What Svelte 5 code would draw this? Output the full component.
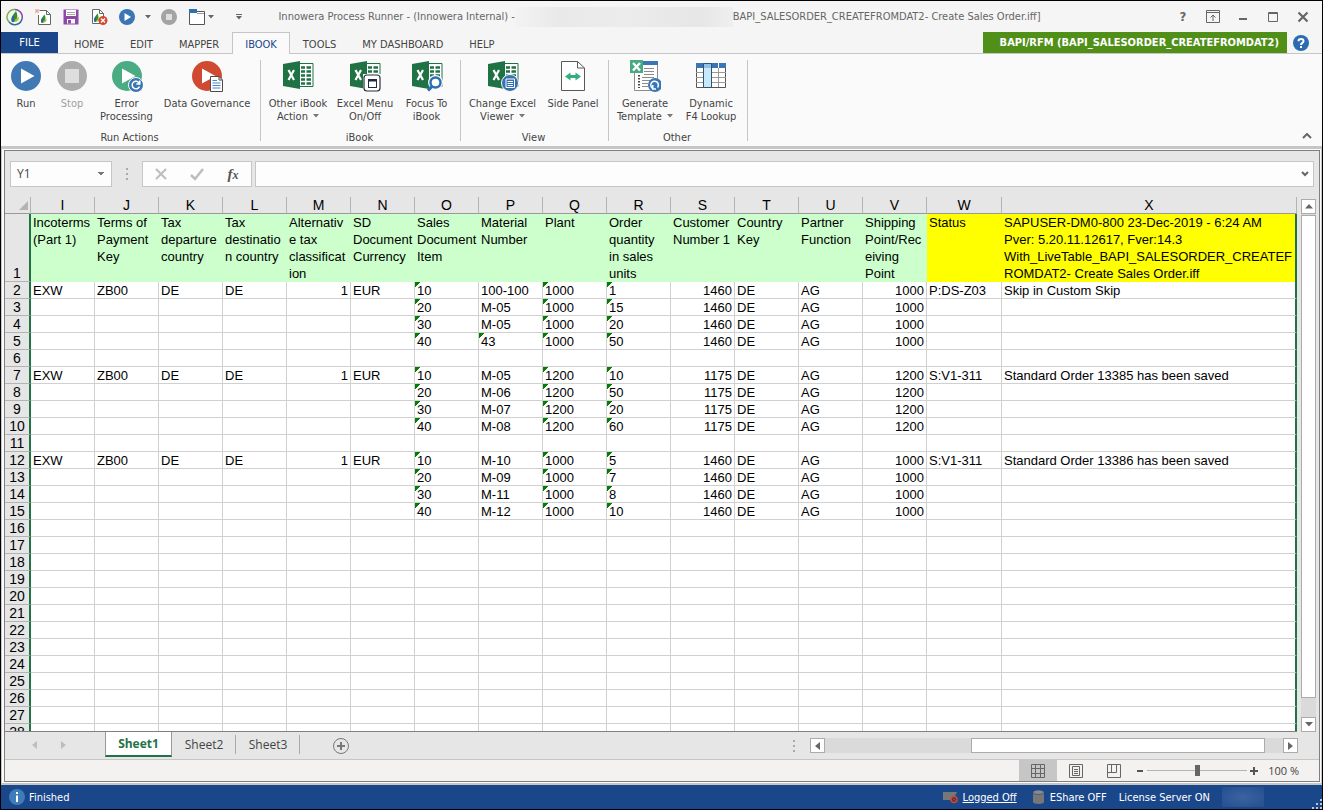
<script lang="ts">
    type RibbonButton = {
        lines: string[];
        icon: string;
        width: number;
        menu?: boolean;
        disabled?: boolean;
    };

    type Column = {
        letter: string;
        title: string;
        tone?: "status";
        numeric?: boolean;
        flagged?: boolean;
    };

    const ribbonTabs = ["HOME", "EDIT", "MAPPER", "IBOOK", "TOOLS", "MY DASHBOARD", "HELP"];
    let activeTab = $state("IBOOK");

    const groups: { name: string; buttons: RibbonButton[] }[] = [
        {
            name: "Run Actions",
            buttons: [
                { lines: ["Run"], icon: "run", width: 46 },
                { lines: ["Stop"], icon: "stop", width: 46, disabled: true },
                { lines: ["Error", "Processing"], icon: "error", width: 63 },
                { lines: ["Data Governance"], icon: "governance", width: 98 },
            ],
        },
        {
            name: "iBook",
            buttons: [
                { lines: ["Other iBook", "Action"], icon: "excel", width: 70, menu: true },
                { lines: ["Excel Menu", "On/Off"], icon: "excel-menu", width: 64 },
                { lines: ["Focus To", "iBook"], icon: "excel-focus", width: 59 },
            ],
        },
        {
            name: "View",
            buttons: [
                { lines: ["Change Excel", "Viewer"], icon: "excel-viewer", width: 79, menu: true },
                { lines: ["Side Panel"], icon: "panel", width: 62 },
            ],
        },
        {
            name: "Other",
            buttons: [
                { lines: ["Generate", "Template"], icon: "template", width: 68, menu: true },
                { lines: ["Dynamic", "F4 Lookup"], icon: "lookup", width: 64 },
            ],
        },
    ];

    const columns: Column[] = [
        { letter: "I", title: "Incoterms\n(Part 1)" },
        { letter: "J", title: "Terms of\nPayment\nKey" },
        { letter: "K", title: "Tax\ndeparture\ncountry" },
        { letter: "L", title: "Tax\ndestinatio\nn country" },
        { letter: "M", title: "Alternativ\ne tax\nclassificat\nion", numeric: true },
        { letter: "N", title: "SD\nDocument\nCurrency" },
        { letter: "O", title: "Sales\nDocument\nItem", flagged: true },
        { letter: "P", title: "Material\nNumber" },
        { letter: "Q", title: "Plant", flagged: true },
        { letter: "R", title: "Order\nquantity\nin sales\nunits", flagged: true },
        { letter: "S", title: "Customer\nNumber 1", numeric: true },
        { letter: "T", title: "Country\nKey" },
        { letter: "U", title: "Partner\nFunction" },
        { letter: "V", title: "Shipping\nPoint/Rec\neiving\nPoint", numeric: true },
        { letter: "W", title: "Status", tone: "status" },
        {
            letter: "X",
            title: "SAPUSER-DM0-800 23-Dec-2019 - 6:24 AM\nPver: 5.20.11.12617, Fver:14.3\nWith_LiveTable_BAPI_SALESORDER_CREATEF\nROMDAT2- Create Sales Order.iff",
            tone: "status",
        },
    ];

    const orders = [
        {
            row: 2, plant: "1000", customer: "1460", status: "P:DS-Z03", message: "Skip in Custom Skip",
            items: [["10", "100-100", "1"], ["20", "M-05", "15"], ["30", "M-05", "20"], ["40", "43", "50"]],
        },
        {
            row: 7, plant: "1200", customer: "1175", status: "S:V1-311", message: "Standard Order 13385 has been saved",
            items: [["10", "M-05", "10"], ["20", "M-06", "50"], ["30", "M-07", "20"], ["40", "M-08", "60"]],
        },
        {
            row: 12, plant: "1000", customer: "1460", status: "S:V1-311", message: "Standard Order 13386 has been saved",
            items: [["10", "M-10", "5"], ["20", "M-09", "7"], ["30", "M-11", "8"], ["40", "M-12", "10"]],
        },
    ];

    const cells: Record<number, string[]> = {};
    for (const o of orders) {
        o.items.forEach(([item, material, qty], i) => {
            const head = i === 0 ? ["EXW", "ZB00", "DE", "DE", "1", "EUR"] : ["", "", "", "", "", ""];
            const tail = i === 0 ? [o.status, o.message] : ["", ""];
            cells[o.row + i] = [
                ...head, item, material, o.plant, qty, o.customer, "DE", "AG", o.plant, ...tail,
            ];
        });
    }

    const rowNumbers = Array.from({ length: 27 }, (_, i) => i + 2);

    // numbers stored as text get the green corner
    function isFlagged(col: Column, value: string) {
        if (!value) return false;
        return !!col.flagged || (col.letter === "P" && /^\d+$/.test(value));
    }

    const sheets = ["Sheet1", "Sheet2", "Sheet3"];
    let activeSheet = $state("Sheet1");
    let zoom = $state(100);
    let formula = $state("");
</script>

{#snippet excelBook()}
    <path d="M15 3.500H31V26.500H15Z" fill="#fff" stroke="#1f7244" />
    <path d="M19 7.500h4M24.500 7.500h4.500M19 11.500h4M24.500 11.500h4.500M19 15.500h4M24.500 15.500h4.500M19 19.500h4M24.500 19.500h4.500M19 23.500h4M24.500 23.500h4.500" stroke="#1f7244" stroke-width="2.600" />
    <path d="M1 4L18 1V29L1 26Z" fill="#1f7244" />
    <path d="M6.500 10L12 20M12 10L6.500 20" stroke="#fff" stroke-width="2.200" />
{/snippet}

{#snippet leaf()}
    <path d="M6 13C4 9 7 6 10 2C12 6 12 11 8 13Z" fill="#2f8f2f" />
    <path d="M6 13C5 10 6 7 8 6L8 13Z" fill="#2b62a8" />
    <path d="M8 13C11 13 13 11 13 8C11 9 9 10 8 13Z" fill="#a6c626" />
{/snippet}

{#snippet ribbonIcon(name: string)}
    <svg class="ribbon-icon" width="32" height="32" viewBox="0 0 32 32" fill="none" aria-hidden="true">
        {#if name === "run"}
            <circle cx="16" cy="16" r="15" fill="#4179b5" />
            <path d="M11 8.500L24.500 16L11 23.500Z" fill="#fff" />
        {:else if name === "stop"}
            <circle cx="16" cy="16" r="15" fill="#adadad" />
            <rect x="9" y="9" width="14" height="14" fill="#dedede" />
        {:else if name === "error"}
            <circle cx="16" cy="16" r="15" fill="#4bab83" />
            <path d="M11 8.500L24.500 16L11 23.500Z" fill="#fff" />
            <circle cx="25" cy="25" r="7.500" fill="#3a75b4" stroke="#fafafa" />
            <path d="M28.200 23A3.800 3.800 0 1 0 28.500 26.500M28.800 20.500V24H25.300" stroke="#fff" stroke-width="1.500" />
        {:else if name === "governance"}
            <circle cx="16" cy="16" r="15" fill="#cf4a31" />
            <path d="M11 8.500L24.500 16L11 23.500Z" fill="#fff" />
            <path d="M19.500 16.500H28L31.500 20V31.500H19.500Z" fill="#fff" stroke="#4d4d4d" />
            <path d="M28 16.500V20H31.500" stroke="#4d4d4d" />
            <path d="M21.500 20.500H26M21.500 23H29.500M21.500 25.500H29.500M21.500 28H29.500" stroke="#4a86c2" />
        {:else if name.startsWith("excel")}
            {@render excelBook()}
            {#if name === "excel-menu"}
                <rect x="14" y="14" width="18" height="18" fill="#fafafa" />
                <rect x="15" y="15" width="16" height="16" rx="3" fill="#fff" stroke="#2b2f3a" stroke-width="1.200" />
                <rect x="19.500" y="19.500" width="8" height="8" fill="#fff" stroke="#1d2a44" />
                <path d="M19 20.500H28" stroke="#1d2a44" stroke-width="2" />
            {:else if name === "excel-focus"}
                <circle cx="24.500" cy="22.500" r="7.500" fill="#fafafa" />
                <circle cx="24.500" cy="22.500" r="5" fill="#fff" stroke="#2a6db5" stroke-width="2.400" />
                <path d="M21 26.500L17 30.500" stroke="#2a6db5" stroke-width="3" />
            {:else if name === "excel-viewer"}
                <circle cx="23" cy="23" r="8.500" fill="#3572b0" stroke="#fafafa" />
                <path d="M19 19H27.500V27.500H19Z" stroke="#fff" />
                <path d="M20.500 21.500H26M20.500 23.500H26M20.500 25.500H26" stroke="#fff" />
            {/if}
        {:else if name === "panel"}
            <path d="M4.500 1.500H20.500L27.500 8V30.500H4.500Z" fill="#fff" stroke="#595959" />
            <path d="M20.500 1.500V8H27.500" stroke="#595959" />
            <path d="M12 16.500H20" stroke="#33ae7c" stroke-width="3" />
            <path d="M8 16.500L13.500 12.500V20.500ZM24 16.500L18.500 12.500V20.500Z" fill="#33ae7c" />
        {:else if name === "template"}
            <path d="M5.500 13V30.500H28.500V2.500H14" fill="#fff" stroke="#8c8c8c" />
            <path d="M14 1H29V5H14Z" fill="#3a75b4" />
            <path d="M1 0H14V13H1Z" fill="#48a982" />
            <path d="M4 3L11 10.500M11 3L4 10.500" stroke="#fff" stroke-width="2.400" />
            <path d="M15 8.500H25M15 11.500H25M15 14.500H25M13 17.500H25M13 20.500H22M13 23.500H19M13 26.500H19" stroke="#8c8c8c" />
            <path d="M10 15V28" stroke="#444" stroke-width="2" stroke-dasharray="1.500 1.500" />
            <circle cx="26" cy="25" r="7" fill="#3a75b4" />
            <path d="M24 28.500A3.800 3.800 0 1 1 28.500 27.500M23.800 25V29H27" stroke="#fff" stroke-width="1.500" />
        {:else}
            <path d="M1.500 3.500H30.500V27.500H1.500Z" fill="#fff" stroke="#555" />
            <path d="M1 3H31V8H1Z" fill="#3a75b4" />
            <path d="M1 12.500H31M1 17.500H31M1 22.500H31M16.500 8V27M23.500 8V27" stroke="#999" />
            <path d="M23.500 3V8" stroke="#fff" />
            <path d="M8.500 3.500H16.500V27.500H8.500Z" fill="#c9e9fb" stroke="#2d5673" />
            <path d="M9 4H16V8H9Z" fill="#8fc1e8" />
        {/if}
    </svg>
{/snippet}

{#snippet caret()}
    <svg class="caret" width="6" height="4" viewBox="0 0 6 4" aria-hidden="true">
        <path d="M0 0H6L3 3.500Z" fill="currentColor" />
    </svg>
{/snippet}

<div class="window">
    <header class="titlebar">
        <div class="quick">
            <button class="quick-btn" aria-label="Application menu">
                <svg width="18" height="18" viewBox="0 0 18 18" fill="none">
                    <path d="M9 1.500A7.500 7.500 0 0 0 3 14" stroke="#7fb24a" stroke-width="1.500" />
                    <path d="M3 14A7.500 7.500 0 0 0 16 11" stroke="#2d6f9f" stroke-width="1.500" />
                    <path d="M9 1.500A7.500 7.500 0 0 1 16 11" stroke="#8a4fa0" stroke-width="1.500" />
                    <g transform="translate(0 1)">{@render leaf()}</g>
                </svg>
            </button>
            <button class="quick-btn" aria-label="New">
                <svg width="18" height="18" viewBox="0 0 18 18" fill="none">
                    <path d="M5.500 2.500H12.500L16.500 6.500V16.500H4.500V7" fill="#fff" stroke="#666" />
                    <path d="M12.500 2.500V6.500H16.500" stroke="#666" />
                    <path d="M3 1V5M1 3H5M1 1L5 5M5 1L1 5" stroke="#e9967a" stroke-width=".7" />
                    <g transform="translate(3 5) scale(.75)">{@render leaf()}</g>
                </svg>
            </button>
            <button class="quick-btn" aria-label="Save">
                <svg width="18" height="18" viewBox="0 0 18 18" fill="none">
                    <path d="M1.500 1.500H16.500V16.500H1.500Z" fill="#8c49a6" />
                    <path d="M4 2H14V8H4Z" fill="#fff" />
                    <path d="M5 4.500H13M5 6.500H13" stroke="#aaa" />
                    <path d="M5 11H13V15.500H5Z" fill="#fff" />
                    <path d="M6 12H9V15.500H6Z" fill="#8c49a6" />
                </svg>
            </button>
            <button class="quick-btn" aria-label="Close file">
                <svg width="18" height="18" viewBox="0 0 18 18" fill="none">
                    <path d="M2.500 1.500H9.500L13.500 5.500V15.500H2.500Z" fill="#fff" stroke="#666" />
                    <path d="M9.500 1.500V5.500H13.500" stroke="#666" />
                    <g transform="translate(0 4) scale(.75)">{@render leaf()}</g>
                    <circle cx="13" cy="12.500" r="4.500" fill="#cf4a31" />
                    <path d="M11 10.500L15 14.500M15 10.500L11 14.500" stroke="#fff" stroke-width="1.300" />
                </svg>
            </button>
            <button class="quick-btn" aria-label="Run">
                <svg width="18" height="18" viewBox="0 0 18 18">
                    <circle cx="9" cy="9" r="8" fill="#3c75b4" />
                    <path d="M6.500 5L13 9L6.500 13Z" fill="#fff" />
                </svg>
            </button>
            <button class="quick-drop" aria-label="Run options">{@render caret()}</button>
            <button class="quick-btn" aria-label="Stop" disabled>
                <svg width="18" height="18" viewBox="0 0 18 18">
                    <circle cx="9" cy="9" r="8" fill="#a3a3a3" />
                    <rect x="6" y="6" width="6" height="6" fill="#dedede" />
                </svg>
            </button>
            <button class="quick-btn" aria-label="Windows">
                <svg width="18" height="18" viewBox="0 0 18 18" fill="none">
                    <path d="M1.500 3.500H16.500V16.500H1.500Z" fill="#fff" stroke="#555" />
                    <path d="M1 1H9V5H1Z" fill="#2f6fb3" />
                    <path d="M9 5.500H16" stroke="#999" />
                </svg>
            </button>
            <button class="quick-drop window-drop" aria-label="Window list">{@render caret()}</button>
            <button class="quick-drop customize" aria-label="Customize toolbar">
                <svg width="6" height="6" viewBox="0 0 6 6">
                    <path d="M0 0H6V1H0ZM0 2H6L3 5.500Z" fill="#666" />
                </svg>
            </button>
        </div>
        <div class="title">
            <span>Innowera Process Runner - (Innowera Internal) -</span>
            <span class="redacted"></span>
            <span>BAPI_SALESORDER_CREATEFROMDAT2- Create Sales Order.iff]</span>
        </div>
        <div class="window-buttons">
            <button aria-label="Help"><b>?</b></button>
            <button aria-label="Ribbon display options">
                <svg width="14" height="13" viewBox="0 0 14 13" fill="none" stroke="#666">
                    <path d="M.5 .5H13.500V12.500H.5ZM.5 2.500H13.500M7 11V5M4.500 7.500L7 5L9.500 7.500" />
                </svg>
            </button>
            <button aria-label="Minimize">
                <svg width="12" height="12" viewBox="0 0 12 12"><path d="M2 7H10V9H2Z" fill="#666" /></svg>
            </button>
            <button aria-label="Maximize">
                <svg width="12" height="12" viewBox="0 0 12 12" fill="none" stroke="#666">
                    <path d="M1.500 1.500H10.500V10.500H1.500ZM1 2.500H11" />
                </svg>
            </button>
            <button aria-label="Close">
                <svg width="12" height="12" viewBox="0 0 12 12" stroke="#666" stroke-width="2.200">
                    <path d="M1.500 1.500L10.500 10.500M10.500 1.500L1.500 10.500" />
                </svg>
            </button>
        </div>
    </header>

    <nav class="tabs">
        <button class="file">FILE</button>
        {#each ribbonTabs as tab}
            <button class="tab" class:active={tab === activeTab} onclick={() => (activeTab = tab)}>{tab}</button>
        {/each}
        <span class="badge">BAPI/RFM (BAPI_SALESORDER_CREATEFROMDAT2)</span>
        <button class="help" aria-label="Help topics">
            <svg width="16" height="16" viewBox="0 0 16 16" fill="none">
                <circle cx="8" cy="8" r="8" fill="#2b6cb0" />
                <path d="M5.500 6.200C5.500 3.200 10.500 3.200 10.500 6.200C10.500 8 8 7.800 8 10" stroke="#fff" stroke-width="2" />
                <path d="M7 11H9V13H7Z" fill="#fff" />
            </svg>
        </button>
    </nav>

    <section class="ribbon">
        {#each groups as group}
            <div class="group">
                <div class="group-buttons">
                    {#each group.buttons as button}
                        <button class="ribbon-btn" style:width="{button.width}px" disabled={button.disabled}>
                            {@render ribbonIcon(button.icon)}
                            {#each button.lines as line, i}
                                <span>
                                    {line}
                                    {#if button.menu && i === button.lines.length - 1}{@render caret()}{/if}
                                </span>
                            {/each}
                        </button>
                    {/each}
                </div>
                <div class="group-name">{group.name}</div>
            </div>
        {/each}
        <button class="collapse" aria-label="Collapse ribbon">
            <svg width="10" height="6" viewBox="0 0 10 6" fill="none" stroke="#666" stroke-width="2">
                <path d="M1 5L5 1L9 5" />
            </svg>
        </button>
    </section>

    <main class="workspace">
        <div class="workbook">
            <div class="formula-bar">
                <select class="name-box" aria-label="Name box">
                    <option>Y1</option>
                </select>
                <span class="dots"></span>
                <div class="formula-actions">
                    <button aria-label="Cancel">
                        <svg width="14" height="14" viewBox="0 0 14 14" stroke="#bdbdbd" stroke-width="2">
                            <path d="M2 2L12 12M12 2L2 12" />
                        </svg>
                    </button>
                    <button aria-label="Enter">
                        <svg width="14" height="14" viewBox="0 0 14 14" fill="none" stroke="#bdbdbd" stroke-width="2.500">
                            <path d="M1 8L5 12L13 2" />
                        </svg>
                    </button>
                    <button class="fx" aria-label="Insert function">f<small>x</small></button>
                </div>
                <div class="formula-field">
                    <input type="text" aria-label="Formula" bind:value={formula} />
                    <button aria-label="Expand formula bar">
                        <svg width="8" height="6" viewBox="0 0 8 6" fill="none" stroke="#666" stroke-width="2">
                            <path d="M1 1L4 4L7 1" />
                        </svg>
                    </button>
                </div>
            </div>

            <div class="sheet">
                <div class="grid">
                    <table>
                        <colgroup>
                            <col class="col-row" />
                            {#each columns as col}
                                <col class="col-{col.letter.toLowerCase()}" />
                            {/each}
                        </colgroup>
                        <thead>
                            <tr>
                                <th class="corner" aria-label="Select all">
                                    <svg width="9" height="9" viewBox="0 0 9 9"><path d="M9 0V9H0Z" fill="#b4b4b4" /></svg>
                                </th>
                                {#each columns as col}
                                    <th scope="col">{col.letter}</th>
                                {/each}
                            </tr>
                        </thead>
                        <tbody>
                            <tr class="titles">
                                <th scope="row">1</th>
                                {#each columns as col}
                                    <td class:status={col.tone === "status"}>{col.title}</td>
                                {/each}
                            </tr>
                            {#each rowNumbers as n}
                                <tr>
                                    <th scope="row">{n}</th>
                                    {#each columns as col, i}
                                        {@const value = cells[n]?.[i] ?? ""}
                                        <td class:numeric={col.numeric} class:flagged={isFlagged(col, value)}>{value}</td>
                                    {/each}
                                </tr>
                            {/each}
                        </tbody>
                    </table>
                </div>
                <div class="vscroll">
                    <button aria-label="Scroll up">
                        <svg width="8" height="5" viewBox="0 0 8 5"><path d="M0 4.500H8L4 0Z" fill="#666" /></svg>
                    </button>
                    <div class="thumb"></div>
                    <div class="space"></div>
                    <button aria-label="Scroll down">
                        <svg width="8" height="5" viewBox="0 0 8 5"><path d="M0 0H8L4 4.500Z" fill="#666" /></svg>
                    </button>
                </div>
            </div>

            <div class="sheet-bar">
                <div class="sheet-nav">
                    <button aria-label="Previous sheet">
                        <svg width="5" height="8" viewBox="0 0 5 8"><path d="M5 0V8L0 4Z" fill="#bdbdbd" /></svg>
                    </button>
                    <button aria-label="Next sheet">
                        <svg width="5" height="8" viewBox="0 0 5 8"><path d="M0 0V8L5 4Z" fill="#bdbdbd" /></svg>
                    </button>
                </div>
                {#each sheets as sheet}
                    <button
                        class="sheet-tab"
                        class:active={sheet === activeSheet}
                        onclick={() => (activeSheet = sheet)}>{sheet}</button>
                {/each}
                <button class="add-sheet" aria-label="New sheet">
                    <svg width="16" height="16" viewBox="0 0 16 16" fill="none" stroke="#777">
                        <circle cx="8" cy="8" r="7.500" />
                        <path d="M8 4V12M4 8H12" stroke-width="2" />
                    </svg>
                </button>
                <span class="dots"></span>
                <div class="hscroll">
                    <button aria-label="Scroll left">
                        <svg width="5" height="8" viewBox="0 0 5 8"><path d="M5 0V8L0 4Z" fill="#666" /></svg>
                    </button>
                    <div class="before"></div>
                    <div class="thumb"></div>
                    <div class="after"></div>
                    <button aria-label="Scroll right">
                        <svg width="5" height="8" viewBox="0 0 5 8"><path d="M0 0V8L5 4Z" fill="#666" /></svg>
                    </button>
                </div>
            </div>

            <div class="view-bar">
                <button class="view active" aria-label="Normal view">
                    <svg width="14" height="14" viewBox="0 0 14 14" fill="none" stroke="#666">
                        <path d="M.5 .5H13.500V13.500H.5ZM.5 4.500H13.500M.5 9.500H13.500M4.500 .5V13.500M9.500 .5V13.500" />
                    </svg>
                </button>
                <button class="view" aria-label="Page layout">
                    <svg width="14" height="14" viewBox="0 0 14 14" fill="none" stroke="#666">
                        <path d="M.5 .5H13.500V13.500H.5ZM3.500 2.500H10.500V11.500H3.500ZM5 5.500H9M5 7.500H9M5 9.500H9" />
                    </svg>
                </button>
                <button class="view" aria-label="Page break preview">
                    <svg width="14" height="14" viewBox="0 0 14 14" fill="none" stroke="#666">
                        <path d="M.5 .5H13.500V13.500H.5ZM4.500 .5V8.500M9.500 .5V8.500M.5 8.500H9.500" />
                    </svg>
                </button>
                <button class="step" aria-label="Zoom out" onclick={() => (zoom -= 10)}>
                    <svg width="8" height="8" viewBox="0 0 8 8"><path d="M1 3H7V5H1Z" fill="#555" /></svg>
                </button>
                <input type="range" min="0" max="200" bind:value={zoom} aria-label="Zoom" />
                <button class="step" aria-label="Zoom in" onclick={() => (zoom += 10)}>
                    <svg width="8" height="8" viewBox="0 0 8 8"><path d="M0 3H8V5H0ZM3 0H5V8H3Z" fill="#555" /></svg>
                </button>
                <span class="zoom-value">{zoom} %</span>
            </div>
        </div>
    </main>

    <footer class="statusbar">
        <svg width="16" height="16" viewBox="0 0 16 16">
            <circle cx="8" cy="8" r="8" fill="#3f7cbc" />
            <path d="M7 3H9V5H7ZM7 6.500H9V13H7Z" fill="#fff" />
        </svg>
        <span class="finished">Finished</span>
        <svg width="16" height="14" viewBox="0 0 16 14" fill="none">
            <path d="M1 2H15L11 10H1Z" fill="#777" />
            <circle cx="12" cy="9.500" r="3" fill="#3a3550" stroke="#d1492e" stroke-width="1.500" />
            <path d="M11 8.500L13 10.500M13 8.500L11 10.500" stroke="#d1492e" />
        </svg>
        <a href="#login">Logged Off</a>
        <svg width="11" height="14" viewBox="0 0 11 14">
            <path d="M0 2V12C0 14.500 11 14.500 11 12V2Z" fill="#777" />
            <ellipse cx="5.500" cy="2.200" rx="5.500" ry="2.200" fill="#8a8a8a" stroke="#1a478a" stroke-width=".6" />
        </svg>
        <span class="eshare">EShare OFF</span>
        <span>License Server ON</span>
        <span class="redacted-user"></span>
        <svg class="grip" width="10" height="10" viewBox="0 0 10 10" fill="#b9c6dc">
            <path d="M8 0H10V2H8ZM4 4H6V6H4ZM8 4H10V6H8ZM0 8H2V10H0ZM4 8H6V10H4ZM8 8H10V10H8Z" />
        </svg>
    </footer>
</div>

<style>
    :global(body) {
      margin: 0;
      overflow: hidden;
    }

    .window {
      display: flex;
      flex-direction: column;
      box-sizing: border-box;
      height: 100vh;
      border: 1px solid #000;
      background: #f5f5f5;
      color: #444;
      font-family: Tahoma, "DejaVu Sans Condensed", sans-serif;
      font-size: 11px;
      line-height: 13px;
      white-space: nowrap;
    }

    button {
      display: flex;
      align-items: center;
      justify-content: center;
      margin: 0;
      padding: 0;
      border: 0;
      background: none;
      color: inherit;
      font: inherit;
    }

    .titlebar {
      display: grid;
      grid-template-columns: 1fr auto 1fr;
      align-items: center;
      height: 31px;
      color: #666;
    }

    .quick {
      display: flex;
      align-items: center;
    }

    .quick-btn {
      width: 28px;
      height: 24px;
    }

    .quick-drop {
      width: 14px;
      height: 24px;

      &.window-drop {
        width: 8px;
        margin-left: -4px;
      }

      &.customize {
        margin-left: 17px;
      }
    }

    .title {
      display: flex;
      align-items: center;
      padding-right: 4px;
    }

    .redacted {
      width: 218px;
      height: 20px;
      background: linear-gradient(90deg, #f3f3f3, #e9e9e9 20%, #ececec 50%, #e6e6e6 85%, #efefef);
    }

    .window-buttons {
      display: flex;
      justify-content: flex-end;
      padding-right: 4px;

      button {
        width: 30px;
        height: 24px;
      }

      b {
        font-size: 13px;
      }
    }

    .tabs {
      display: flex;
      height: 21px;
      border-bottom: 1px solid #c6c6c6;

      .file {
        width: 57px;
        margin-right: 3px;
        background: #1a478a;
        color: #fff;
      }
    }

    .tab {
      box-sizing: border-box;
      padding: 2px 12px 0;
      border: 1px solid transparent;
      border-bottom: 0;

      &.active {
        height: 22px;
        border-color: #c6c6c6;
        background: #fafafa;
        color: #1a478a;
      }
    }

    .badge {
      margin-left: auto;
      padding: 0 8px 0 17px;
      background: #509018;
      color: #fff;
      font-weight: bold;
      line-height: 21px;
    }

    .help {
      width: 16px;
      margin: 0 13px 0 6px;
    }

    .ribbon {
      display: flex;
      padding: 6px 0 5px;
      background: #fafafa;
      border-bottom: 3px solid #c6c6c6;
    }

    .group {
      display: flex;
      flex-direction: column;
      justify-content: space-between;
      height: 81px;
      padding: 0 4px 0 2px;
      border-right: 1px solid #c6c6c6;
    }

    .group-buttons {
      display: flex;
      align-items: flex-start;
    }

    .ribbon-btn {
      flex-direction: column;

      &:disabled {
        color: #a0a0a0;
      }
    }

    .ribbon-icon {
      margin-bottom: 5px;
    }

    .ribbon-btn .caret {
      margin-left: 2px;
      vertical-align: 2px;
      color: #777;
    }

    .group-name {
      margin-bottom: -3px;
      text-align: center;
    }

    .collapse {
      align-self: flex-end;
      margin: 0 10px 2px auto;
    }

    .workspace {
      display: flex;
      flex: 1;
      min-height: 0;
      padding: 1px 1px 1px 2px;
      border-right: 1px solid #c6c6c6;
      border-left: 1px solid #c6c6c6;
      border-bottom: 2px solid #c6c6c6;
      background: #fcfcfc;
    }

    .workbook {
      display: flex;
      flex: 1;
      flex-direction: column;
      min-width: 0;
      border: 1px solid #808080;
      background: #e6e6e6;
      font-family: "Segoe UI", "Open Sans", sans-serif;
      font-size: 12px;
      line-height: 16px;
    }

    .formula-bar {
      display: flex;
      padding: 10px 5px;
    }

    .name-box,
    .formula-actions,
    .formula-field {
      box-sizing: border-box;
      height: 26px;
      border: 1px solid #c6c6c6;
      background: #fdfdfd;
    }

    .name-box {
      width: 102px;
      padding: 0 6px;
      appearance: none;
      border-radius: 0;
      background:
        linear-gradient(45deg, transparent 50%, #777 50%) no-repeat right 10px center / 4px 4px,
        linear-gradient(-45deg, transparent 50%, #777 50%) no-repeat right 6px center / 4px 4px,
        #fdfdfd;
      color: #444;
      font: inherit;
    }

    .dots {
      align-self: center;
      width: 2px;
      height: 12px;
      background: repeating-linear-gradient(#aaa 0 2px, transparent 2px 5px);
    }

    .formula-bar .dots {
      margin: 0 14px;
    }

    .formula-actions {
      display: flex;
      width: 110px;
      margin-right: 3px;

      button {
        flex: 1;
      }

      .fx {
        color: #555;
        font: italic bold 15px "Liberation Serif", serif;
      }

      small {
        padding-top: 3px;
        font-size: 12px;
      }
    }

    .formula-field {
      display: flex;
      flex: 1;

      input {
        flex: 1;
        border: 0;
        background: none;
        font: inherit;
      }

      button {
        width: 16px;
      }
    }

    .sheet {
      display: flex;
      flex: 1;
      min-height: 0;
    }

    .grid {
      flex: 1;
      overflow: hidden;
      border-bottom: 1px solid #808080;
    }

    table {
      width: 100%;
      table-layout: fixed;
      border-collapse: separate;
      border-spacing: 0;
      color: #000;
      font-family: Arial, "Liberation Sans", sans-serif;
      font-size: 13px;
      line-height: 16px;
    }

    .col-row {
      width: 26px;
    }

    col {
      width: 64px;
    }

    .col-w {
      width: 75px;
    }

    .col-x {
      width: auto;
    }

    th {
      padding: 0;
      background: #e6e6e6;
      font-size: 14px;
      font-weight: normal;
    }

    thead th {
      height: 16px;
      border-right: 1px solid #b4b4b4;
      border-bottom: 1px solid #999;
    }

    .corner {
      padding-right: 2px;
      text-align: right;

      svg {
        display: block;
        margin-left: auto;
      }
    }

    tbody th {
      vertical-align: bottom;
      border-right: 2px solid #217346;
      border-bottom: 1px solid #b4b4b4;
    }

    td {
      height: 14px;
      padding: 2px 2px 0;
      overflow: hidden;
      border-right: 1px solid #d0d0d0;
      border-bottom: 1px solid #d0d0d0;
      background: #fff;
      line-height: 14px;
      white-space: pre;

      &:last-child {
        border-right: 2px solid #217346;
      }

      &.numeric {
        text-align: right;
      }

      &.flagged {
        background: linear-gradient(135deg, #008000 4px, transparent 4px) #fff;
      }
    }

    .titles td {
      height: 68px;
      padding-top: 0;
      border-right-color: #cfc;
      border-bottom: 0;
      background: #cfc;
      line-height: 17px;
      vertical-align: top;

      &.status {
        border-right-color: #ff0;
        background: #ff0;
      }

      &:last-child {
        border-right-color: #217346;
      }
    }

    .vscroll {
      display: flex;
      flex-direction: column;
      width: 15px;
      margin: 2px 3px 0 4px;
      background: #dadada;

      .thumb {
        flex: 33;
        margin-top: 1px;
      }

      .space {
        flex: 1;
        min-height: 19px;
      }
    }

    .vscroll button,
    .hscroll button,
    .thumb {
      box-sizing: border-box;
      border: 1px solid #ababab;
      background: #fff;
    }

    .vscroll button,
    .hscroll button {
      width: 15px;
      height: 15px;
    }

    .sheet-bar {
      display: flex;
      height: 27px;
      border-bottom: 1px solid #c6c6c6;
      color: #444;
    }

    .sheet-nav {
      display: flex;
      gap: 24px;
      width: 73px;
      padding: 0 0 2px 27px;
    }

    .sheet-tab {
      box-sizing: border-box;
      position: relative;
      width: 64px;
      height: 25px;

      &:not(.active)::after {
        position: absolute;
        top: 3px;
        right: 0;
        bottom: 3px;
        border-right: 1px solid #ababab;
        content: "";
      }

      &.active {
        width: 67px;
        padding-top: 1px;
        border-right: 1px solid #999;
        border-bottom: 2px solid #217346;
        border-left: 1px solid #999;
        background: #fff;
        color: #217346;
        font-weight: bold;
      }
    }

    .add-sheet {
      width: 16px;
      margin-left: 33px;
    }

    .sheet-bar .dots {
      margin-left: auto;
    }

    .hscroll {
      display: flex;
      flex: 0 1 488px;
      align-self: center;
      margin: 0 21px 0 15px;
      background: #dadada;

      .before {
        flex: 8;
      }

      .thumb {
        flex: 16;
      }

      .after {
        flex: 1;
      }
    }

    .view-bar {
      display: flex;
      align-items: center;
      justify-content: flex-end;
      height: 21px;
      padding-right: 20px;
      background: #f3f2f0;

      .view {
        width: 38px;
        height: 21px;

        &.active {
          background: #c6c6c6;
        }
      }

      .step {
        width: 14px;
        height: 20px;
      }

      input {
        width: 100px;
        height: 16px;
        margin: 0;
        appearance: none;
        background: linear-gradient(#b4b4b4, #b4b4b4) no-repeat center / 100% 1px;
      }

      input::-webkit-slider-thumb {
        width: 5px;
        height: 11px;
        appearance: none;
        background: #666;
      }
    }

    .zoom-value {
      margin-left: 7px;
      font-size: 11px;
    }

    .statusbar {
      display: flex;
      align-items: center;
      height: 24px;
      padding-left: 8px;
      background: #1a478a;
      color: #fff;

      a {
        margin: 0 16px 0 5px;
        color: #fff;
      }
    }

    .finished {
      margin: 0 auto 0 4px;
    }

    .eshare {
      margin: 0 12px 0 6px;
    }

    .redacted-user {
      width: 42px;
      height: 20px;
      margin: 0 48px 0 12px;
      background: radial-gradient(#3c639f, #234f90);
    }

    .grip {
      align-self: flex-end;
    }
</style>
